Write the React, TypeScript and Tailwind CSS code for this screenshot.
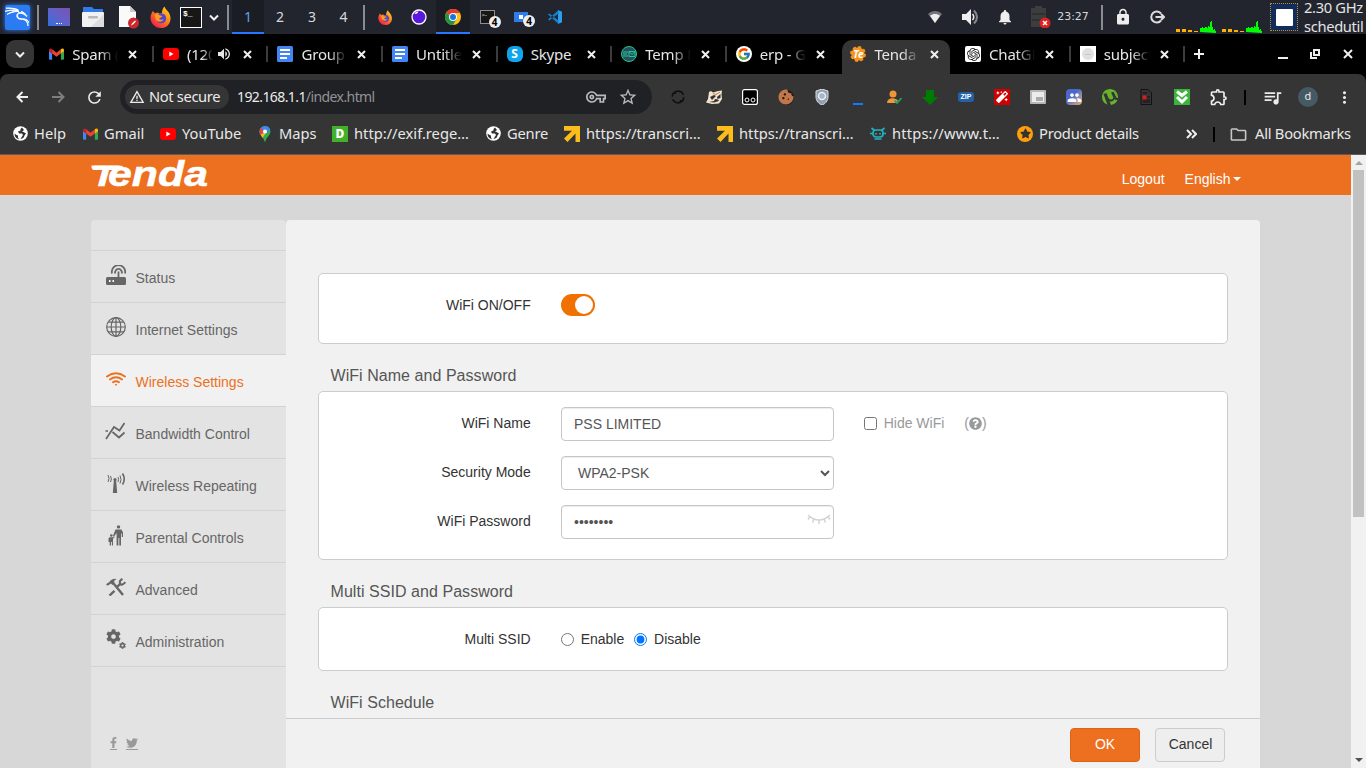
import React from 'react';
import type { ReactNode } from 'react';
import {
  MdWarningAmber, MdOutlineVpnKey, MdStarBorder, MdOutlineExtension, MdRefresh,
  MdOutlineQueueMusic, MdMoreVert, MdOutlineFolder, MdVolumeUp, MdLock,
  MdNotifications, MdCookie, MdPeople,
} from 'react-icons/md';
import { FaFacebookF, FaTwitter, FaQuestionCircle, FaCog, FaStar, FaMagic } from 'react-icons/fa';
import { SiKalilinux, SiOpenai, SiUtorrent } from 'react-icons/si';
import { FcGoogle } from 'react-icons/fc';

function Stroke({ d, w, h, color = '#f0f0f0', className = '' }: { d: string; w: number; h: number; color?: string; className?: string }) {
  return (
    <svg className={`shrink-0 ${className}`} width={w} height={h} viewBox={`0 0 ${w} ${h}`} fill="none" stroke={color} strokeWidth="2">
      <path d={d} />
    </svg>
  );
}

const CHEVRON = 'M1 1.500 5 5.500 9 1.500';
const CROSS = 'm1 1 7 7M8 1 1 8';

function Firefox({ size }: { size: number }) {
  return (
    <svg width={size} height={size} viewBox="0 0 24 24">
      <defs>
        <linearGradient id="fx" x1="1" y1="0" x2="0.2" y2="1">
          <stop offset="0" stopColor="#ffe226" /><stop offset="0.45" stopColor="#ff8a16" /><stop offset="1" stopColor="#f4154e" />
        </linearGradient>
      </defs>
      <path fill="url(#fx)" d="M3 5.500 5.400 8 8 7 11 8.500 13 8c0-3 1-6 3-7.500 0 2.500 3 4 4.500 6.500C25 14.500 21 24 12 24S-1.500 15 1.500 8.500Z" />
      <circle cx="12.200" cy="13.500" r="5.400" fill="#5446c8" />
      <path fill="#ff9a1f" d="M5 9.500c2-1.500 4-1 5.500.5l3 .8c-.5 1.800-3 1.500-3.500 3 1 1.500 3.500 1.500 5 .5-1 3-6 4-8.500 1Z" />
    </svg>
  );
}

function Gmail() {
  return (
    <svg width="15" height="12" viewBox="0 0 24 18">
      <path fill="#4285f4" d="M0 3v13.500C0 17.300.7 18 1.500 18H5V8Z" />
      <path fill="#34a853" d="M24 3v13.500c0 .8-.7 1.500-1.500 1.500H19V8Z" />
      <path fill="#ea4335" d="M5 8V1.500l7 5.500 7-5.500V8l-7 5.500Z" />
      <path fill="#c5221f" d="M0 3C0 0 3-.5 5 1.500V8L0 4.500Z" />
      <path fill="#fbbc04" d="M24 3c0-3-3-3.500-5-1.500V8l5-3.500Z" />
    </svg>
  );
}

function YouTube() {
  return (
    <svg width="16" height="12" viewBox="0 0 16 12">
      <rect width="16" height="12" rx="3" fill="#f00" />
      <path d="M6.300 3.500v5l4.200-2.500Z" fill="#fff" />
    </svg>
  );
}

function Docs() {
  return (
    <svg width="16" height="16" viewBox="0 0 16 16">
      <rect width="16" height="16" rx="1.500" fill="#4285f4" />
      <path d="M3 4h10M3 8h10M3 12h7" stroke="#fff" strokeWidth="1.800" />
    </svg>
  );
}

function ArrowMark() {
  return (
    <svg width="16" height="16" viewBox="0 0 16 16">
      <path d="M0 0h16v16h-4.500V7.500L3.500 16 0 12.500 8 4.700H0Z" fill="#fbbc1c" />
    </svg>
  );
}

function Globe() {
  return (
    <svg width="15" height="15" viewBox="0 0 15 15">
      <circle cx="7.500" cy="7.500" r="7.300" fill="#fff" />
      <path d="M9 1.500 7.500 3v1.500L5 5.500l1 2h3l1 1.500-1 1.500-1.500 2.500q3.500-.5 4-3.500L13 7.500 10.500 6 9 5.500l2-1.500ZM1.500 7.500 3.500 9l1.500.5v2l1 1.700Q1.500 12 1.500 7.500" fill="#333" />
    </svg>
  );
}

function Chrome() {
  return (
    <svg width="16" height="16" viewBox="0 0 16 16">
      <circle cx="8" cy="8" r="8" fill="#fbc116" />
      <path d="M8 8 1.070 4A8 8 0 0 1 14.930 4H8Z" fill="#e33b2e" />
      <path d="M8 8 1.070 4A8 8 0 0 0 8 16l3.500-6Z" fill="#229342" />
      <circle cx="8" cy="8" r="4" fill="#fff" />
      <circle cx="8" cy="8" r="3" fill="#1a73e8" />
    </svg>
  );
}

function Cell({ w, children, className = '' }: { w: string; children?: ReactNode; className?: string }) {
  return <div className={`flex h-full shrink-0 items-center justify-center ${w} ${className}`}>{children}</div>;
}

function Badge() {
  return (
    <span className="absolute -right-[7px] -bottom-[5px] flex size-[12px] items-center justify-center rounded-full bg-[#eee] text-[10px] font-bold text-black">4</span>
  );
}

function TaskBar() {
  return (
    <div className="flex h-[34px] items-center bg-[#23252e] text-[15px] text-[#d5d8dc]">
      <Cell w="w-[34px]">
        <span className="flex size-[25px] items-center justify-center overflow-hidden rounded-[2px] bg-[#2b7bf3] shadow-[0_0_5px_#2b7bf3]">
          <SiKalilinux size={24} color="#fff" strokeWidth={0.9} />
        </span>
      </Cell>
      <Cell w="w-[8px]"><span className="h-[25px] w-[2px] bg-[#8b8c90]" /></Cell>
      <Cell w="w-[34px]">
        <span className="flex h-[18px] w-[22px] items-end justify-center bg-linear-to-tr from-[#2970e0] to-[#7d50b0] pb-[2px]">
          <span className="w-[6px] border-b border-dotted border-white" />
        </span>
      </Cell>
      <Cell w="w-[34px]">
        <svg width="22" height="20" viewBox="0 0 22 20">
          <path d="M1 0h9l2 2h9v8H1Z" fill="#2f7bea" /><rect y="5" width="22" height="15" rx="1" fill="#f1f1f1" />
          <path d="M22 7v13H9Z" fill="#dedede" /><rect x="6" y="9" width="10" height="2.500" rx="1" fill="#b9b9b9" />
        </svg>
      </Cell>
      <Cell w="w-[34px]" className="pl-[4px]">
        <svg width="20" height="23" viewBox="0 0 20 23">
          <path d="M0 0h11l6 6v15H0Z" fill="#fafafa" /><path d="M11 0v6h6Z" fill="#c9c9c9" />
          <circle cx="14.500" cy="17" r="5.500" fill="#d0262d" /><path d="m12 19.500 1-2 3-3 1 1-3 3Z" fill="#fff" />
        </svg>
      </Cell>
      <Cell w="w-[34px]"><Firefox size={22} /></Cell>
      <Cell w="w-[26px]">
        <span className="h-[21px] w-[22px] border border-white bg-[#171717] pl-[2px] font-['Liberation_Mono'] text-[8px] leading-[12px] font-bold text-white">$_</span>
      </Cell>
      <Cell w="w-[20px]"><Stroke d={CHEVRON} w={10} h={7} /></Cell>
      <Cell w="w-[8px]"><span className="h-[25px] w-[2px] bg-[#8b8c90]" /></Cell>
      <Cell w="w-[32px]" className="border-b-2 border-[#2777ff] bg-[#1b1d24] pt-px text-[14px] text-[#5da3e8]">1</Cell>
      <Cell w="w-[32px]" className="pb-px text-[14px]">2</Cell>
      <Cell w="w-[32px]" className="pb-px text-[14px]">3</Cell>
      <Cell w="w-[31px]" className="pb-px text-[14px]">4</Cell>
      <Cell w="w-[9px]"><span className="h-[25px] w-[2px] bg-[#8b8c90]" /></Cell>
      <Cell w="w-[34px]"><Firefox size={15} /></Cell>
      <Cell w="w-[34px]">
        <svg width="16" height="16" viewBox="0 0 16 16">
          <circle cx="8" cy="8" r="7" fill="#5a18dc" stroke="#fff" strokeWidth="1.300" /><path d="M3.500 5a3.500 3.500 0 0 1 4-2.500A4 4 0 0 1 3.500 5" fill="#fff" />
        </svg>
      </Cell>
      <Cell w="w-[34px]" className="border-b-2 border-[#2777ff] bg-[#1b1d24] pt-[2px]"><Chrome /></Cell>
      <Cell w="w-[34px]">
        <span className="relative h-[14px] w-[15px] border border-[#8d8d8d] bg-[#171717] pl-px text-[6px] leading-[9px] text-white">&gt;-<Badge /></span>
      </Cell>
      <Cell w="w-[34px]">
        <span className="relative flex h-[10px] w-[14px] items-center justify-center bg-[#2f7bea]">
          <span className="size-[4px] bg-white" /><Badge />
        </span>
      </Cell>
      <Cell w="w-[34px]">
        <svg width="14" height="14" viewBox="0 0 14 14">
          <path d="M10 0 14 1.700v10.600L10 14Z" fill="#2a9ff0" /><path d="M0 4.500 1.300 3.500 10.500 10.500V14ZM0 9.500l1.300 1L10.500 3.500V0Z" fill="#1080cf" />
        </svg>
      </Cell>
      <div className="flex-1" />
      <Cell w="w-[34px]">
        <svg width="14" height="12" viewBox="0 0 14 12">
          <path d="M0 3C4-1 10-1 14 3L7 12Z" fill="#74767b" /><path d="M2 4.800C5 2.500 9 2.500 12 4.800L7 12Z" fill="#eee" />
        </svg>
      </Cell>
      <Cell w="w-[36px]">
        <svg width="17" height="16" viewBox="0 0 17 16" fill="none">
          <path d="M0 5h4l5-5v16l-5-5H0Z" fill="#eee" /><path d="M10.500 5q2.500 3 0 6" stroke="#eee" strokeWidth="1.500" /><path d="M12 1.500q6 6.500 0 13" stroke="#85878b" strokeWidth="2" />
        </svg>
      </Cell>
      <Cell w="w-[34px]"><MdNotifications size={18} color="#eee" /></Cell>
      <Cell w="w-[34px]" className="pl-1">
        <svg width="20" height="22" viewBox="0 0 20 22">
          <path d="M4 0h7v2h4v19H0V2h4Z" fill="#3c3d3d" /><path d="M1 8h13M1 14h13" stroke="#23252e" />
          <circle cx="14" cy="17" r="5.500" fill="#db2222" /><path d="m12 15 4 4m0-4-4 4" stroke="#fff" strokeWidth="1.500" />
        </svg>
      </Cell>
      <Cell w="w-[36px]" className="pr-[2px] font-['DejaVu_Sans'] text-[11px]">23:27</Cell>
      <Cell w="w-[20px]"><span className="h-[25px] w-[2px] bg-[#8b8c90]" /></Cell>
      <Cell w="w-[22px]"><MdLock size={18} color="#eee" /></Cell>
      <Cell w="w-[46px]">
        <svg width="15" height="14" viewBox="0 0 15 14" fill="none" stroke="#ddd" strokeWidth="2">
          <path d="M11 3.500A5.500 5.500 0 1 0 11 10.500M5.500 7H14M11 4l3 3-3 3" />
        </svg>
      </Cell>
      <svg className="ml-[-4px] shrink-0" width="88" height="32" viewBox="0 0 88 32">
        {[0, 46].map((x) => (
          <g key={x}>
            <path d={`M${x} 31v-3h4v3m2 0v-3h4v3m2 0v-2h4v2m2 0v-1h4v1`} fill="#ffb000" />
            <path d={`M${x + 24} 31v-4h2v-1h1v1h2v-1h2v1h1v-2h1v1h1v-5h1v-1h1v6h1v3h1v-1h1v2h1v2Z`} fill="#0f0" />
          </g>
        ))}
      </svg>
      <span className="ml-[6px] flex size-[28px] shrink-0 items-center justify-center border border-dotted border-[#b88a2c] bg-[#122d59]">
        <span className="size-[17px] rounded-[1px] bg-white" />
      </span>
      <div className="ml-[6px] w-[62px] shrink-0 text-[14.700px] leading-[19px] tracking-[-0.330px] whitespace-nowrap text-[#e4e4e4]">2.30 GHz<br />schedutil</div>
    </div>
  );
}

type TabProps = { icon: ReactNode; title: string; active?: boolean; sep?: boolean; sound?: boolean };

function Tab({ icon, title, active, sep = true, sound }: TabProps) {
  return (
    <div className="flex h-[34px] w-[114.600px] shrink-0 items-center">
      <div className={`flex h-full w-[108px] items-center pb-[6px] pl-[8px] ${active ? 'rounded-t-[10px] bg-[#353535]' : ''}`}>
        <span className="flex w-4 shrink-0 justify-center">{icon}</span>
        <span className={`ml-[8px] shrink-0 overflow-hidden tracking-[-0.200px] whitespace-nowrap ${title === 'Skype' ? 'w-[54px]' : sound ? 'w-[26px] [mask-image:linear-gradient(to_right,#000_60%,transparent)]' : 'w-[46px] [mask-image:linear-gradient(to_right,#000_60%,transparent)]'}`}>{title}</span>
        {sound && <MdVolumeUp size={16} className="ml-[3px] shrink-0" />}
        <Stroke d={CROSS} w={9} h={9} className={sound ? 'ml-[11px]' : title === 'Skype' ? 'ml-[2px]' : 'ml-[10px]'} />
      </div>
      <span className={sep ? 'mb-[6px] ml-[3.500px] h-4 w-[2px] bg-[#3c3c3c]' : 'hidden'} />
    </div>
  );
}

function TabStrip() {
  return (
    <div className="flex h-[40px] items-end bg-black text-[15px] text-[#e6e6e6]">
      <div className="flex h-[40px] w-[40.300px] shrink-0 items-center pl-[6px]">
        <span className="flex size-[28px] items-center justify-center rounded-[9px] bg-[#353535]"><Stroke d={CHEVRON} w={10} h={7} /></span>
      </div>
      <Tab icon={<Gmail />} title="Spam (1" />
      <Tab icon={<YouTube />} title="(120)" sound />
      <Tab icon={<Docs />} title="Group p" />
      <Tab icon={<Docs />} title="Untitled" />
      <Tab icon={<span className="flex size-4 items-center justify-center rounded-[6px] bg-linear-to-br from-[#0b9fe5] to-[#12a9f5] text-[12px] leading-none font-bold text-white">S</span>} title="Skype" />
      <Tab
        icon={
          <svg width="16" height="16" viewBox="0 0 16 16" fill="none" stroke="#1fc798">
            <circle cx="8" cy="8" r="7.500" fill="#28505c" /><path d="M2 6h5M2 8h4M2 10h5M8 5.500h6v5H8Zm0 0 3 3 3-3" />
          </svg>
        }
        title="Temp M"
      />
      <Tab icon={<span className="flex size-4 items-center justify-center rounded-full bg-white"><FcGoogle size={14} /></span>} title="erp - Go" sep={false} />
      <Tab
        icon={
          <span className="relative flex size-4 items-center justify-center">
            <svg className="absolute inset-0" viewBox="0 0 16 16"><circle cx="8" cy="8" r="6.800" fill="#f7941e" stroke="#f7941e" strokeWidth="2.400" strokeDasharray="3 2.340" /></svg>
            <span className="relative text-[10px] leading-none font-bold text-white italic">Te</span>
          </span>
        }
        title="Tenda W" active sep={false}
      />
      <Tab icon={<span className="flex size-4 items-center justify-center rounded-[2px] bg-white"><SiOpenai size={13} color="#222" /></span>} title="ChatGP" />
      <Tab icon={<span className="flex size-4 items-center justify-center bg-white"><span className="flex size-3 items-center justify-center rounded-full bg-[#dfdfdf]"><span className="h-px w-[6px] bg-[#c8c8c8]" /></span></span>} title="subject" />
      <span className="flex h-[40px] items-center pl-[8px]"><Stroke d="M5 0v10M0 5h10" w={10} h={10} /></span>
      <div className="ml-auto flex h-[40px] items-center pr-[13px]">
        <span className="mt-[8px] h-[2px] w-[10px] bg-[#eee]" />
        <svg className="ml-[22px]" width="10" height="10" viewBox="0 0 10 10" fill="none" stroke="#eee" strokeWidth="2">
          <path d="M4 1h5v5H4ZM1 3v6h6" />
        </svg>
        <Stroke d="m1 1 8 8M9 1 1 9" w={10} h={10} className="ml-[23px]" />
      </div>
    </div>
  );
}

function Extensions() {
  return (
    <>
      <Cell w="w-[36px]"><svg width="16" height="16" viewBox="0 0 16 16" fill="none" stroke="#111" strokeWidth="1.700"><circle cx="8" cy="8" r="5.800" strokeDasharray="15.200 3" /><path d="M2 4.500h3.500V2M14 11.500h-3.500V14" strokeWidth="1.200" /></svg></Cell>
      <Cell w="w-[36px]">
        <svg width="17" height="15" viewBox="0 0 17 15">
          <path d="M3 2 5 1l2 1.500L12 1l4-.5-.5 4L16 9l-3 4.500L6 14l-6-1.500L2 9Z" fill="#f3e3d0" /><path d="m4 7 4-2 2 1-4 4Zm7 0 3.500-3v4l-3 1ZM3 12l5-1 1-2 3 .5 1 1.500-5 1.500Z" fill="#333" /><path d="m7 3.500 3 1 4-2.500" stroke="#c08050" fill="none" />
        </svg>
      </Cell>
      <Cell w="w-[36px]">
        <svg width="16" height="16" viewBox="0 0 16 16" stroke="#fff" fill="#000">
          <rect x=".6" y=".6" width="14.800" height="14.800" rx="2" strokeWidth="1.200" /><circle cx="5" cy="11" r="2" /><circle cx="11" cy="11" r="2" />
        </svg>
      </Cell>
      <Cell w="w-[36px]">
        <span className="flex size-[15px] items-center justify-center rounded-full bg-[#231510]"><MdCookie size={18} color="#c0774b" className="shrink-0" /></span>
      </Cell>
      <Cell w="w-[36px]">
        <svg width="14" height="16" viewBox="0 0 14 16">
          <path d="M7 0 13 2v6c0 4-3 7-6 8C4 15 1 12 1 8V2Z" fill="#93a0b2" stroke="#d5dae2" /><circle cx="7" cy="7" r="3.500" fill="#a9b4c4" stroke="#e9edf2" strokeWidth="1.500" />
        </svg>
      </Cell>
      <Cell w="w-[36px]" className="pt-[14px]"><span className="h-[2px] w-[10px] bg-[#0a7cff]" /></Cell>
      <Cell w="w-[36px]">
        <svg width="16" height="14" viewBox="0 0 16 14" fill="#f0963a">
          <circle cx="7" cy="4" r="3.500" /><path d="M1 13c0-6 9-6 11-2l-3 2Z" /><path d="m8.500 10.500 2.500 2.500 4.500-5" stroke="#21a465" strokeWidth="1.700" fill="none" />
        </svg>
      </Cell>
      <Cell w="w-[36px]"><svg width="16" height="15" viewBox="0 0 16 15"><path d="M4 0h8v7h4l-8 8-8-8h4Z" fill="#007a00" /></svg></Cell>
      <Cell w="w-[36px]"><span className="flex h-[10px] w-4 items-center justify-center rounded-[3px] bg-[#2361a8] font-['Liberation_Sans'] text-[7px] font-bold text-white">ZIP</span></Cell>
      <Cell w="w-[36px]"><span className="flex size-4 items-center justify-center bg-[#d00000]"><FaMagic size={12} color="#fff" /></span></Cell>
      <Cell w="w-[36px]"><span className="flex h-[14px] w-4 items-end justify-end rounded-[1px] border-2 border-[#b7b7b7] bg-[#ececec] p-px"><span className="h-[4px] w-[7px] bg-[#aaa]" /></span></Cell>
      <Cell w="w-[36px]"><span className="flex size-4 items-center justify-center rounded-[4px] bg-linear-to-br from-[#4a68cc] from-40% to-[#f4a850]"><MdPeople size={15} color="#fff" /></span></Cell>
      <Cell w="w-[36px]"><SiUtorrent size={16} color="#67b32e" /></Cell>
      <Cell w="w-[36px]">
        <svg width="12" height="16" viewBox="0 0 12 16">
          <path d="M1 .5h7l3.500 3.500v11.500H1Z" fill="#343434" stroke="#111" /><path d="M3 4h4M3 11h7M3 13h7M7 8h3" stroke="#111" /><rect x="2.500" y="6.500" width="4" height="4" fill="#d81b1b" />
        </svg>
      </Cell>
      <Cell w="w-[36px]">
        <svg width="16" height="16" viewBox="0 0 16 16"><rect width="16" height="16" fill="#3bb43b" /><path d="m3 2.500 5 4 5-4M3 8l5 5 5-5" stroke="#fff" strokeWidth="3" fill="none" /></svg>
      </Cell>
      <Cell w="w-[36px]" className="pl-[2px]"><MdOutlineExtension size={20} color="#f0f0f0" /></Cell>
    </>
  );
}

function Toolbar() {
  return (
    <div className="bg-black">
      <div className="flex h-[44px] items-center rounded-t-[8px] bg-[#353535] pt-[2px] text-[14.700px] text-[#ececec]">
        <Cell w="w-[36px]" className="ml-[4px]"><Stroke d="M12 6H2M6.500 1 1.500 6l5 5" w={13} h={12} /></Cell>
        <Cell w="w-[36px]"><Stroke d="M0 6h11M6.500 1l5 5-5 5" w={13} h={12} color="#7e7e7e" /></Cell>
        <Cell w="w-[36px]"><MdRefresh size={19} /></Cell>
        <div className="ml-[8px] flex h-[34px] w-[532px] shrink-0 items-center rounded-full bg-[#202124] pl-[5px]">
          <span className="flex h-[24px] w-[104px] items-center rounded-full bg-[#353535] pl-[4px]">
            <MdWarningAmber size={16} /><span className="ml-[4px] pb-px tracking-[-0.350px] whitespace-nowrap">Not secure</span>
          </span>
          <span className="ml-[8px] pb-px text-[14px] tracking-[-0.590px]">192.168.1.1<span className="text-[#929396]">/index.html</span></span>
          <MdOutlineVpnKey size={20} color="#b9babc" className="ml-auto" />
          <MdStarBorder size={20} color="#b9babc" className="mr-[14px] ml-[12px]" />
        </div>
        <div className="w-[8px] shrink-0" />
        <Extensions />
        <Cell w="w-[18px]"><span className="h-[15px] w-[2px] bg-black" /></Cell>
        <Cell w="w-[36px]"><MdOutlineQueueMusic size={21} /></Cell>
        <Cell w="w-[36px]"><span className="flex size-[20px] items-center justify-center rounded-full bg-[#455a64] pb-px text-[11px]">d</span></Cell>
        <Cell w="w-[36px]"><MdMoreVert size={19} /></Cell>
      </div>
    </div>
  );
}

function Bookmark({ w, icon, children }: { w: string; icon: ReactNode; children: ReactNode }) {
  return (
    <div className={`flex shrink-0 items-center whitespace-nowrap ${w}`}>
      <span className="mr-[6px] flex w-4 shrink-0 justify-center">{icon}</span><span className="pb-[2px]">{children}</span>
    </div>
  );
}

function Bookmarks() {
  return (
    <div className="flex h-[37px] items-center border-b border-[#5c5c5c] bg-[#353535] pb-[4px] pl-[12px] text-[14.700px] text-[#e8e8e8]">
      <Bookmark w="w-[70px]" icon={<Globe />}>Help</Bookmark>
      <Bookmark w="w-[78px]" icon={<Gmail />}>Gmail</Bookmark>
      <Bookmark w="w-[97px]" icon={<YouTube />}>YouTube</Bookmark>
      <Bookmark
        w="w-[75px]"
        icon={
          <svg width="12" height="16" viewBox="0 0 12 16">
            <path d="M6 0a5.500 5.500 0 0 1 5.500 5.500C11.500 9 7.500 11 6.500 15.500h-1C4.500 11 .5 9 .5 5.500A5.500 5.500 0 0 1 6 0" fill="#34a853" />
            <path d="M6 0a5.500 5.500 0 0 1 5.200 3.500L4 10 .8 7.500C0 3 3 0 6 0" fill="#4285f4" /><path d="M.7 4 2 2l3 3-3.500 4C.5 7 .4 5 .7 4" fill="#ea4335" /><path d="m1.500 8.500 6-2.500-4 6Z" fill="#fbbc04" /><circle cx="6" cy="5.500" r="2" fill="#fff" />
          </svg>
        }
      >Maps</Bookmark>
      <Bookmark w="w-[153px]" icon={<span className="flex size-4 items-center justify-center bg-[#43b02a] text-[12px] leading-none font-black text-white">D</span>}>http://exif.rege…</Bookmark>
      <Bookmark w="w-[79px]" icon={<Globe />}><span className="tracking-[-0.200px]">Genre</span></Bookmark>
      <Bookmark w="w-[153px]" icon={<ArrowMark />}>https://transcri…</Bookmark>
      <Bookmark w="w-[153px]" icon={<ArrowMark />}>https://transcri…</Bookmark>
      <Bookmark
        w="w-[147px]"
        icon={
          <svg width="16" height="13" viewBox="0 0 16 13" fill="none" stroke="#25b0bd" strokeWidth="1.700">
            <rect x="3" y="3" width="10" height="7" rx="3" /><path d="m1.500 1 3 2.500M14.500 1l-3 2.500M0 6.500h3M13 6.500h3M4.500 12h7M6 6v1.500M10 6v1.500" />
          </svg>
        }
      ><span className="tracking-[0.170px]">https://www.t…</span></Bookmark>
      <Bookmark w="w-[168px]" icon={<span className="flex size-4 items-center justify-center rounded-full bg-[#ff9d0a]"><FaStar size={11} color="#333" /></span>}><span className="tracking-[-0.230px]">Product details</span></Bookmark>
      <Cell w="w-[12px]"><Stroke d="m1 1 4 4-4 4M6 1l4 4-4 4" w={11} h={10} /></Cell>
      <span className="ml-[16px] h-[15px] w-[2px] bg-black" />
      <MdOutlineFolder size={19} color="#c8c8c8" className="ml-[14px]" />
      <span className="ml-[7px] pb-[2px] tracking-[-0.230px] whitespace-nowrap">All Bookmarks</span>
    </div>
  );
}

function RouterIcon() {
  return (
    <svg width="20" height="20" viewBox="0 0 20 20" fill="none" stroke="#666" strokeWidth="1.800">
      <rect y="12" width="20" height="8" rx="1.500" fill="#666" stroke="none" />
      <path d="M12.500 6.500V12M9.300 8.500a3.400 3.400 0 1 1 6.400 0M6 8.500a6.700 6.700 0 1 1 13 0" /><path d="M3 16h1.500M6.500 16H8" stroke="#fff" />
    </svg>
  );
}

function GlobeLines() {
  return (
    <svg width="20" height="20" viewBox="0 0 20 20" fill="none" stroke="#666" strokeWidth="1.200">
      <circle cx="10" cy="10" r="9.300" /><ellipse cx="10" cy="10" rx="4.800" ry="9.300" /><path d="M10 .7v18.600M.7 10h18.600M2.500 5.200h15M2.500 14.800h15" />
    </svg>
  );
}

function WifiIcon() {
  return (
    <svg width="20" height="14" viewBox="0 0 20 14" fill="none" stroke="#ed7020" strokeWidth="1.900" strokeLinecap="round">
      <path d="M1 4.500Q10-2 19 4.500M4 7.500q6-4.500 12 0M7 10.300q3-2.200 6 0" /><circle cx="10" cy="12.700" r=".5" strokeWidth="1" fill="#ed7020" />
    </svg>
  );
}

function ChartIcon() {
  return (
    <svg width="21" height="18" viewBox="0 0 21 18" fill="none" stroke="#666" strokeWidth="1.700">
      <path d="m1 17 8-12 5.500 3.500L19.500 1M7.500 10l6.500 5.500 5.500-5M.5 9H3" />
    </svg>
  );
}

function RepeaterIcon() {
  return (
    <svg width="20" height="20" viewBox="0 0 20 20" fill="none" stroke="#666" strokeWidth="1">
      <path d="M8 6h2l1.200 14H6.800Z" fill="#666" stroke="none" /><circle cx="9" cy="6.500" r="1.600" fill="#666" stroke="none" />
      <path d="M4.500 3q1.800 3 0 6M2 2q2 3.500 0 7M12 4q1.200 2.500 0 5M14 2.500q2 4 0 8" /><path d="M16.500 0.500q3.500 5.500 0 11" strokeWidth="1.600" />
    </svg>
  );
}

function FamilyIcon() {
  return (
    <svg width="16" height="21" viewBox="0 0 16 21" fill="#666">
      <circle cx="10.500" cy="1.900" r="1.700" /><path d="M7.500 4.500h6l1.500 3v4.500h-1.200V8.500H13v12h-1.700V13h-.9v7.500H8.600V8L6 11.500l-1-.8Z" />
      <circle cx="3.300" cy="10.500" r="1.300" /><path d="M1.500 12.200H5l1-1 .7.800L5 13.800v6.700H3.900V17h-.9v3.500H1.700V17H.5v-3.500Z" />
    </svg>
  );
}

function ToolsIcon() {
  return (
    <svg width="20" height="18" viewBox="0 0 20 18" fill="none" stroke="#666" strokeWidth="2.400">
      <path d="m3.500 17.500 5-4.700M8 6l9 11M11.500 8.500 15 5" /><path d="M0 7 1 5.500Q4 4 4.500 2.500 7 .3 10.500 1L8 3l1 3-2.500 1L5 5.500 2 7.500Z" fill="#666" stroke="none" /><path d="M16.500 1Q13 2.500 14 5.500T19.500 4.200" strokeWidth="2" />
    </svg>
  );
}

const MENU: { label: string; icon: ReactNode }[] = [
  { label: 'Status', icon: <RouterIcon /> },
  { label: 'Internet Settings', icon: <GlobeLines /> },
  { label: 'Wireless Settings', icon: <WifiIcon /> },
  { label: 'Bandwidth Control', icon: <ChartIcon /> },
  { label: 'Wireless Repeating', icon: <RepeaterIcon /> },
  { label: 'Parental Controls', icon: <FamilyIcon /> },
  { label: 'Advanced', icon: <ToolsIcon /> },
  { label: 'Administration', icon: <span className="flex h-5 w-5"><FaCog size={15} className="shrink-0" /><FaCog size={7} className="mt-[13px] -ml-[2px] shrink-0" /></span> },
];

function Sidebar() {
  return (
    <nav className="flex w-[195px] shrink-0 flex-col rounded-t-[4px] bg-[#e3e3e3] text-[14px] text-[#666]">
      <div className="h-[30px]" />
      {MENU.map((m, i) => (
        <div key={m.label} className={`flex h-[52px] items-center border-t border-[#d3d3d3] pl-[14px] ${i === 2 ? 'bg-[#f1f1f1] text-[#ed7020]' : ''}`}>
          <span className="mb-[3px] flex w-[21px] justify-center">{m.icon}</span>
          <span className="mt-[4px] ml-[9.500px]">{m.label}</span>
        </div>
      ))}
      <div className="flex flex-1 items-start gap-[9px] border-t border-[#d3d3d3] pt-[70px] pl-[19px] text-[#999]">
        <span className="border-b border-[#999] pb-px"><FaFacebookF size={11} className="w-[7px]" /></span>
        <span className="border-b border-[#999]"><FaTwitter size={12} /></span>
      </div>
    </nav>
  );
}

function Row({ label, children }: { label: string; children: ReactNode }) {
  return (
    <div className="flex h-[34px] items-center">
      <span className="w-[211.700px] shrink-0 pb-[2px] text-right text-[14px] text-[#333]">{label}</span>
      <div className="ml-[30.300px] flex items-center">{children}</div>
    </div>
  );
}

function Title({ children }: { children: ReactNode }) {
  return <h2 className="pl-[12.500px] text-[16px] leading-[24px] tracking-[0.050px] text-[#555]">{children}</h2>;
}

const FIELD = 'h-[34px] w-[273px] rounded-[4px] border border-[#c6c6c6] bg-white text-[14px] text-[#555] shadow-[inset_0_1px_1px_rgba(0,0,0,0.075)]';

function RouterPage() {
  return (
    <div className="flex h-[613px] font-['Liberation_Sans',sans-serif]">
      <div className="flex flex-1 flex-col bg-[#d7d7d7]">
        <header className="flex h-[40px] shrink-0 justify-between bg-[#ed7020] pr-[110.500px] pl-[91px] text-[14px] text-white">
          <svg width="120" height="40" viewBox="0 0 120 40" fill="#fff">
            <path d="M.5 10.500h26q4 0 6 .7L23 15H2Q0 13.500.5 10.500Z" />
            <text y="31.300" fontFamily="Liberation Sans" fontWeight="bold" fontStyle="italic" stroke="#fff" strokeWidth=".5">
              <tspan x="0" fontSize="29.500" textLength="25" lengthAdjust="spacingAndGlyphs">T</tspan>
              <tspan x="17" fontSize="35.500" textLength="100" lengthAdjust="spacingAndGlyphs">enda</tspan>
            </text>
          </svg>
          <div className="flex items-center gap-[20px] pt-[8px]">
            <span>Logout</span>
            <span className="flex items-center">English<span className="ml-[2px] border-x-4 border-t-4 border-x-transparent border-t-white" /></span>
          </div>
        </header>
        <div className="mt-[25px] ml-[91px] flex w-[1169px] flex-1 self-start">
          <Sidebar />
          <main className="flex flex-1 flex-col rounded-t-[4px] bg-[#f1f1f1]">
            <div className="flex h-[498px] flex-col overflow-hidden px-[32px] pt-[53px]">
              <section className="h-[71px] shrink-0 rounded-[5px] border border-[#ccc] bg-white pt-[15px]">
                <Row label="WiFi ON/OFF">
                  <span className="mb-[2px] flex h-[22px] w-[34px] items-center justify-end rounded-full bg-[#f07000] pr-[2px]"><span className="size-[18px] rounded-full bg-white" /></span>
                </Row>
              </section>
              <div className="mt-[20px]"><Title>WiFi Name and Password</Title></div>
              <section className="mt-[3px] flex h-[169px] shrink-0 flex-col gap-[15px] rounded-[5px] border border-[#ccc] bg-white pt-[15px]">
                <Row label="WiFi Name">
                  <input className={`${FIELD} px-[12px]`} defaultValue="PSS LIMITED" />
                  <input type="checkbox" className="mb-px ml-[30px] size-[13px]" />
                  <span className="ml-[6.700px] pb-px text-[14px] text-[#999]">Hide WiFi</span>
                  <span className="ml-[20px] flex items-center pb-px text-[14px] text-[#999]">(<FaQuestionCircle size={13} />)</span>
                </Row>
                <Row label="Security Mode">
                  <select className={`${FIELD} pl-[12px]`}><option>WPA2-PSK</option></select>
                </Row>
                <Row label="WiFi Password">
                  <div className={`${FIELD} flex items-center justify-between pr-[2px] pl-[12px]`}>
                    <input type="password" defaultValue="password" className="w-[180px] bg-transparent" />
                    <svg className="mb-[5px]" width="24" height="11" viewBox="0 0 24 11" fill="none" stroke="#d3d3d3" strokeWidth="1.500">
                      <path d="M1 1q11 10 22 0M3 2.500 1 5.500M7 5 5.500 8.500M12 6v4M17 5l1.500 3.500M21 2.500l2 3" />
                    </svg>
                  </div>
                </Row>
              </section>
              <div className="mt-[20px]"><Title>Multi SSID and Password</Title></div>
              <section className="mt-[3px] h-[64px] shrink-0 rounded-[5px] border border-[#ccc] bg-white pt-[15px]">
                <Row label="Multi SSID">
                  <div className="flex items-center pb-[2px] text-[14px] text-[#333]">
                    <input type="radio" name="multi" className="size-[13px]" /><span className="ml-[6.700px]">Enable</span>
                    <input type="radio" name="multi" defaultChecked className="ml-[9.500px] size-[13px]" /><span className="ml-[7.300px]">Disable</span>
                  </div>
                </Row>
              </section>
              <div className="mt-[20px]"><Title>WiFi Schedule</Title></div>
            </div>
            <div className="flex flex-1 items-start justify-end gap-[15px] border-t border-[#ccc] pt-[9px] pr-[35px] text-[14px]">
              <button className="h-[34px] w-[70px] rounded-[4px] border border-[#dd6414] bg-[#ed7020] pb-px text-white">OK</button>
              <button className="h-[34px] w-[70px] rounded-[4px] border border-[#ccc] bg-[#eee] pb-px pl-px text-[#333]">Cancel</button>
            </div>
          </main>
        </div>
      </div>
      <div className="flex w-[15px] flex-col items-center bg-[#f1f1f1]">
        <span className="mt-[6px] border-x-4 border-b-4 border-x-transparent border-b-[#a3a3a3]" />
        <span className="mt-[5px] h-[347px] w-[11px] bg-[#c1c1c1]" />
        <span className="mt-auto mb-[6px] border-x-4 border-t-4 border-x-transparent border-t-[#505050]" />
      </div>
    </div>
  );
}

export default function App() {
  return (
    <div className="h-[768px] w-[1366px] overflow-hidden font-['Noto_Sans',sans-serif]">
      <TaskBar />
      <TabStrip />
      <Toolbar />
      <Bookmarks />
      <RouterPage />
    </div>
  );
}
